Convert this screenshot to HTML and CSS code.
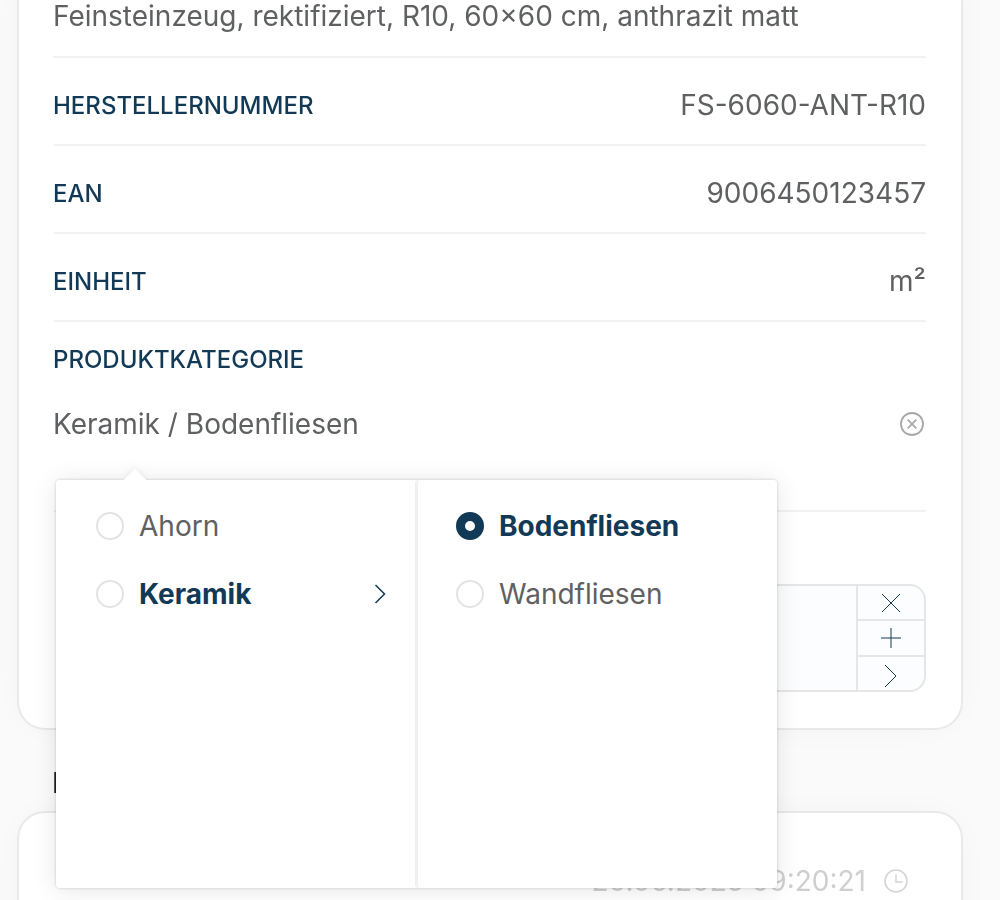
FILE: index.html
```html
<!DOCTYPE html>
<html lang="de">
<head>
<meta charset="utf-8">
<title>Produkt</title>
<link rel="stylesheet" href="styles.css">
</head>
<body>
<main class="page">
  <section class="card card-top">
    <p class="desc">Feinsteinzeug, rektifiziert, R10, 60×60 cm, anthrazit matt</p>
    <div class="row"><span class="label">HERSTELLERNUMMER</span><span class="value">FS-6060-ANT-R10</span></div>
    <div class="row"><span class="label">EAN</span><span class="value">9006450123457</span></div>
    <div class="row"><span class="label">EINHEIT</span><span class="value">m²</span></div>
    <div class="category">
      <div class="label">PRODUKTKATEGORIE</div>
      <div class="cat-value">
        <span class="value">Keramik / Bodenfliesen</span>
        <svg class="clear" viewBox="0 0 24 24" width="24" height="24" fill="none" stroke="#a8a8a8" stroke-width="1.8"><circle cx="12" cy="12" r="11"/><path d="M7.7 7.7l8.6 8.6M16.3 7.7l-8.6 8.6"/></svg>
      </div>
    </div>
    <div class="label upload-label">BILD</div>
    <div class="editor">
      <div class="editor-main"></div>
      <div class="editor-tools">
        <button class="tool" type="button"><svg viewBox="0 0 20 20" width="20" height="20" fill="none" stroke="#123a56" stroke-width="1"><path d="M1 1l18 18M19 1L1 19"/></svg></button>
        <button class="tool" type="button"><svg viewBox="0 0 20 20" width="20" height="20" fill="none" stroke="#123a56" stroke-width="1"><path d="M0 10h20M10 0v20"/></svg></button>
        <button class="tool" type="button"><svg class="tool-chev" viewBox="0 0 20 24" width="20" height="24" fill="none" stroke="#123a56" stroke-width="1"><path d="M4 1l11 11L4 23"/></svg></button>
      </div>
    </div>
  </section>
  <h2 class="section-title">Historie</h2>
  <section class="card card-bottom">
    <div class="time-row">
      <span class="time">20.06.2025 09:20:21</span>
      <svg class="clock" viewBox="0 0 24 24" width="24" height="24" fill="none" stroke="#d4d4d4" stroke-width="1.6"><circle cx="12" cy="12" r="11"/><path d="M12 5.5V13h6.5"/></svg>
    </div>
  </section>

  <div class="popup">
    <span class="arrow"></span>
    <ul class="col">
      <li class="opt"><span class="radio"></span><span class="name">Ahorn</span></li>
      <li class="opt opt-open"><span class="radio"></span><span class="name strong">Keramik</span>
        <svg class="chev" viewBox="0 0 12 20" width="12" height="20" fill="none" stroke="#123a56" stroke-width="1.5"><path d="M1.5 1l9 9-9 9"/></svg>
      </li>
    </ul>
    <ul class="col">
      <li class="opt"><span class="radio radio-on"></span><span class="name strong">Bodenfliesen</span></li>
      <li class="opt"><span class="radio"></span><span class="name">Wandfliesen</span></li>
    </ul>
  </div>
</main>
</body>
</html>
```

FILE: styles.css
```css
* { box-sizing: border-box; }
html, body { margin: 0; height: 100%; overflow: hidden; }
body { background: #fafafa; font-family: Inter, "Liberation Sans", sans-serif; color: #5f6062; }
.page { position: relative; width: 1000px; height: 900px; overflow: hidden; padding: 0 37px 0 17px; opacity: .999; }
.card {
  background: #fff;
  border: 2px solid #e9e9e9;
  border-radius: 28px;
  padding: 0 35px;
  width: 946px;
  box-shadow: 0 0 40px rgba(0,0,0,.035);
}
.card-top { margin-top: -30px; height: 760px; border-top: 0; border-radius: 0 0 28px 28px; }
.desc { margin: 0 0 0 -1px; height: 88px; padding: 30px 0 0 0; font-size: 28px; line-height: 32px; border-bottom: 2px solid #f2f2f2; white-space: nowrap; }
.row { height: 88px; padding-top: 7px; display: flex; align-items: center; justify-content: space-between; border-bottom: 2px solid #f2f2f2; }
.label { font-size: 24px; font-weight: 500; color: #123a56; line-height: 28px; margin-left: -1px; padding-top: 2px; }
.value { font-size: 28px; line-height: 32px; color: #5f6062; }
.category { height: 190px; padding-top: 22px; border-bottom: 2px solid #f2f2f2; }
.cat-value { display: flex; justify-content: space-between; align-items: center; margin-top: 34px; padding-right: 2px; }
.cat-value .value { margin-left: -1px; }
.label.upload-label { margin: 24px 0 0 4px; }
.editor { margin: 18px 0 0 4px; height: 108px; display: flex; border: 2px solid #e6e6e6; border-radius: 0 16px 16px 0; background: #fbfdfe; overflow: hidden; }
.editor-main { flex: 1; }
.editor-tools { width: 68px; display: flex; flex-direction: column; border-left: 2px solid #e6e6e6; }
.tool { flex: 1; padding: 0; border: 0; background: transparent; display: flex; align-items: center; justify-content: center; border-bottom: 2px solid #e6e6e6; }
.tool:last-child { border-bottom: 0; }
.tool-chev { margin-top: 6px; }
.section-title { margin: 39px 0 0 35px; height: 42px; font-size: 28px; line-height: 28px; font-weight: 500; color: #222; }
.card-bottom { height: 200px; padding-top: 50px; }
.time-row { display: flex; align-items: center; height: 36px; padding-right: 18px; }
.time { margin-left: auto; font-size: 28px; line-height: 32px; color: #cfcfcf; }
.clock { margin-left: 18px; }
.popup {
  position: absolute; left: 56px; top: 480px; width: 721px; height: 408px;
  display: flex; background: #fff; border-radius: 4px;
  box-shadow: 0 0 3px rgba(0,0,0,.2), 0 2px 26px rgba(0,0,0,.1);
}
.arrow { position: absolute; left: 71px; top: -8px; width: 16px; height: 16px; background: #fff; transform: rotate(45deg); box-shadow: -2px -2px 6px rgba(0,0,0,.05); }
.col { position: relative; width: 359px; margin: 0; padding: 12px 0 0; list-style: none; background: #fff; border-radius: 4px; }
.col + .col { width: 362px; border-left: 3px solid #f0f0f0; }
.opt { height: 68px; display: flex; align-items: center; padding-left: 40px; padding-right: 29px; }
.col + .col .opt { padding-left: 38px; }
.radio { flex: none; width: 28px; height: 28px; border-radius: 50%; border: 2px solid #e3e3e3; background: #fff; margin-right: 15px; }
.radio-on { border: 9.5px solid #123a56; }
.name { font-size: 28px; line-height: 32px; color: #5f6062; }
.strong { font-weight: 700; color: #123a56; }
.chev { margin-left: auto; }
```
